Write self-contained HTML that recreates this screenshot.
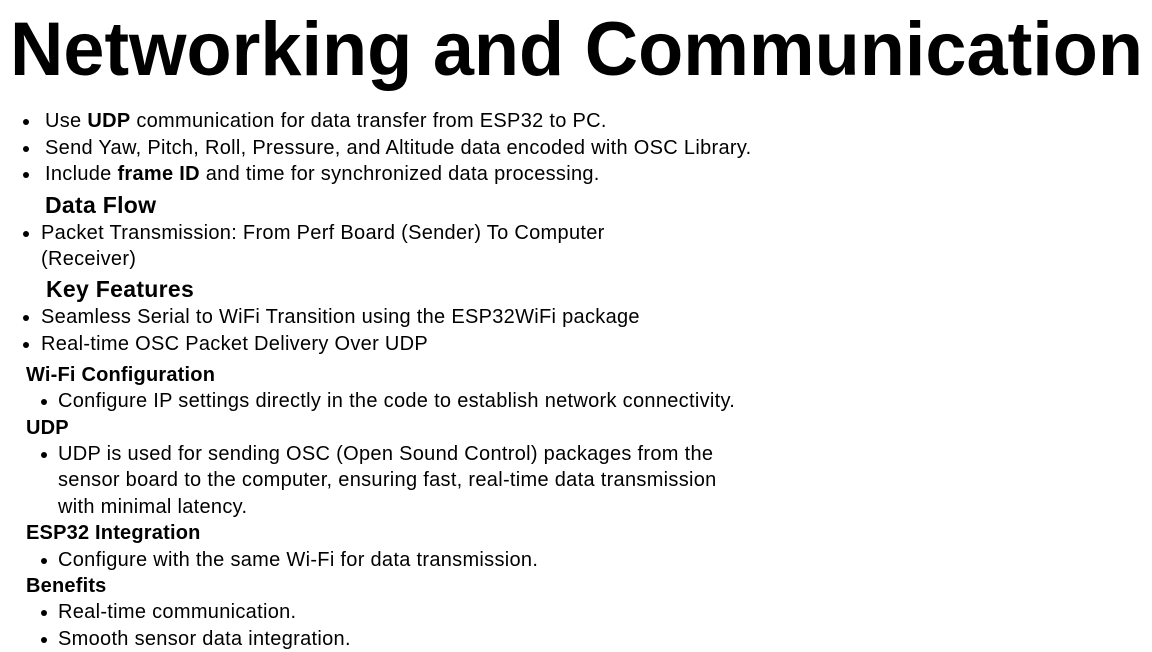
<!DOCTYPE html>
<html><head><meta charset="utf-8"><style>
html,body{margin:0;padding:0;background:#fff;}
body{width:1152px;height:648px;position:relative;overflow:hidden;font-family:"Liberation Sans",sans-serif;color:#000;}
.l{position:absolute;font-size:20px;letter-spacing:0.3px;line-height:26px;white-space:nowrap;}
.h{position:absolute;font-size:23px;letter-spacing:0.3px;line-height:28px;font-weight:bold;white-space:nowrap;}
.s{position:absolute;font-size:20px;letter-spacing:0.2px;line-height:26px;font-weight:bold;white-space:nowrap;}
.d{position:absolute;width:6px;height:6px;border-radius:50%;background:#000;margin-top:3px;}
</style></head><body>
<svg width="1152" height="100" style="position:absolute;left:0;top:0">
<text x="10" y="75" font-family="Liberation Sans" font-weight="bold" font-size="76" textLength="1133" lengthAdjust="spacingAndGlyphs">Networking and Communication</text>
</svg>

<div class="d" style="left:23px;top:116px"></div><div class="l" style="left:45px;top:108px">Use <b>UDP</b> communication for data transfer from ESP32 to PC.</div>
<div class="d" style="left:23px;top:143px"></div><div class="l" style="left:45px;top:135px">Send Yaw, Pitch, Roll, Pressure, and Altitude data encoded with OSC Library.</div>
<div class="d" style="left:23px;top:169px"></div><div class="l" style="left:45px;top:161px">Include <b>frame ID</b> and time for synchronized data processing.</div>
<div class="h" style="left:45px;top:191px">Data Flow</div>
<div class="d" style="left:23px;top:228px"></div><div class="l" style="left:41px;top:220px">Packet Transmission: From Perf Board (Sender) To Computer</div>
<div class="l" style="left:41px;top:246px">(Receiver)</div>
<div class="h" style="left:46px;top:275px">Key Features</div>
<div class="d" style="left:23px;top:312px"></div><div class="l" style="left:41px;top:304px">Seamless Serial to WiFi Transition using the ESP32WiFi package</div>
<div class="d" style="left:23px;top:339px"></div><div class="l" style="left:41px;top:331px">Real-time OSC Packet Delivery Over UDP</div>
<div class="s" style="left:26px;top:362px">Wi-Fi Configuration</div>
<div class="d" style="left:41px;top:396px"></div><div class="l" style="left:58px;top:388px">Configure IP settings directly in the code to establish network connectivity.</div>
<div class="s" style="left:26px;top:415px">UDP</div>
<div class="d" style="left:41px;top:449px"></div><div class="l" style="left:58px;top:441px">UDP is used for sending OSC (Open Sound Control) packages from the</div>
<div class="l" style="left:58px;top:467px">sensor board to the computer, ensuring fast, real-time data transmission</div>
<div class="l" style="left:58px;top:494px">with minimal latency.</div>
<div class="s" style="left:26px;top:520px">ESP32 Integration</div>
<div class="d" style="left:41px;top:555px"></div><div class="l" style="left:58px;top:547px">Configure with the same Wi-Fi for data transmission.</div>
<div class="s" style="left:26px;top:573px">Benefits</div>
<div class="d" style="left:41px;top:607px"></div><div class="l" style="left:58px;top:599px">Real-time communication.</div>
<div class="d" style="left:41px;top:634px"></div><div class="l" style="left:58px;top:626px">Smooth sensor data integration.</div>
</body></html>
